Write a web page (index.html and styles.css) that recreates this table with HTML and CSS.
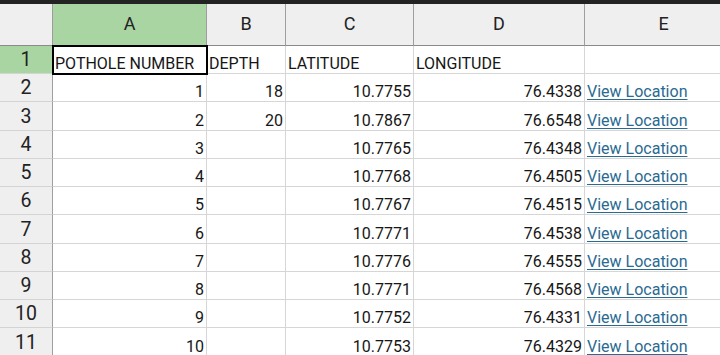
FILE: index.html
```html
<!DOCTYPE html>
<html>
<head>
<meta charset="utf-8">
<link rel="stylesheet" href="styles.css">
</head>
<body>
<div class="topbar"></div>
<div class="sheet">
  <div class="corner"></div>
  <div class="colhead sel">A</div>
  <div class="colhead">B</div>
  <div class="colhead">C</div>
  <div class="colhead">D</div>
  <div class="colhead last">E</div>

  <div class="rowhead sel">1</div>
  <div class="cell active">POTHOLE NUMBER</div>
  <div class="cell">DEPTH</div>
  <div class="cell">LATITUDE</div>
  <div class="cell">LONGITUDE</div>
  <div class="cell"></div>

  <div class="rowhead">2</div>
  <div class="cell num">1</div><div class="cell num">18</div><div class="cell num">10.7755</div><div class="cell num">76.4338</div><div class="cell"><a class="link">View Location</a></div>
  <div class="rowhead">3</div>
  <div class="cell num">2</div><div class="cell num">20</div><div class="cell num">10.7867</div><div class="cell num">76.6548</div><div class="cell"><a class="link">View Location</a></div>
  <div class="rowhead">4</div>
  <div class="cell num">3</div><div class="cell num"></div><div class="cell num">10.7765</div><div class="cell num">76.4348</div><div class="cell"><a class="link">View Location</a></div>
  <div class="rowhead">5</div>
  <div class="cell num">4</div><div class="cell num"></div><div class="cell num">10.7768</div><div class="cell num">76.4505</div><div class="cell"><a class="link">View Location</a></div>
  <div class="rowhead">6</div>
  <div class="cell num">5</div><div class="cell num"></div><div class="cell num">10.7767</div><div class="cell num">76.4515</div><div class="cell"><a class="link">View Location</a></div>
  <div class="rowhead">7</div>
  <div class="cell num">6</div><div class="cell num"></div><div class="cell num">10.7771</div><div class="cell num">76.4538</div><div class="cell"><a class="link">View Location</a></div>
  <div class="rowhead">8</div>
  <div class="cell num">7</div><div class="cell num"></div><div class="cell num">10.7776</div><div class="cell num">76.4555</div><div class="cell"><a class="link">View Location</a></div>
  <div class="rowhead">9</div>
  <div class="cell num">8</div><div class="cell num"></div><div class="cell num">10.7771</div><div class="cell num">76.4568</div><div class="cell"><a class="link">View Location</a></div>
  <div class="rowhead">10</div>
  <div class="cell num">9</div><div class="cell num"></div><div class="cell num">10.7752</div><div class="cell num">76.4331</div><div class="cell"><a class="link">View Location</a></div>
  <div class="rowhead">11</div>
  <div class="cell num">10</div><div class="cell num"></div><div class="cell num">10.7753</div><div class="cell num">76.4329</div><div class="cell"><a class="link">View Location</a></div>
</div>
</body>
</html>
```
FILE: styles.css
```css
html, body {
  margin: 0;
  padding: 0;
  background: #ffffff;
  overflow: hidden;
}
body {
  font-family: Roboto, "Liberation Sans", sans-serif;
  color: #1a1a1a;
  width: 720px;
  height: 355px;
}
.topbar {
  height: 4px;
  background: #232323;
}
.sheet {
  display: grid;
  width: 743px;
  grid-template-columns: 53px 154px 79px 128px 171px 158px;
  grid-template-rows: 42px 28px 28px 29px 28px 28px 28px 29px 28px 28px 28px 29px;
}
.sheet > div {
  box-sizing: border-box;
}
.corner {
  background: #efefef;
  border-right: 1px solid #9e9e9e;
  border-bottom: 1px solid #8a8a8a;
}
.colhead {
  background: #efefef;
  border-right: 1px solid #9e9e9e;
  border-bottom: 1px solid #8a8a8a;
  display: flex;
  align-items: center;
  justify-content: center;
  font-size: 18px;
  color: #222;
  padding-bottom: 2px;
}
.colhead.sel {
  background: #a9d5a3;
}
.rowhead {
  background: #efefef;
  border-right: 1px solid #9e9e9e;
  border-bottom: 1px solid #d4d4d4;
  display: flex;
  align-items: center;
  justify-content: center;
  font-size: 19.5px;
  color: #222;
}
.rowhead.sel {
  background: #a9d5a3;
}
.cell {
  border-right: 1px solid #d6d6d6;
  border-bottom: 1px solid #d6d6d6;
  display: flex;
  align-items: flex-end;
  font-size: 16px;
  line-height: 19px;
  padding: 0 2px 0 2px;
  white-space: nowrap;
  overflow: visible;
  color: #161616;
}
.cell.num {
  justify-content: flex-end;
}
.cell.active {
  outline: 2px solid #000;
  outline-offset: -1px;
  position: relative;
  z-index: 1;
}
.link {
  color: #2a6a91;
  text-decoration: underline;
  text-underline-offset: 2px;
}
```
